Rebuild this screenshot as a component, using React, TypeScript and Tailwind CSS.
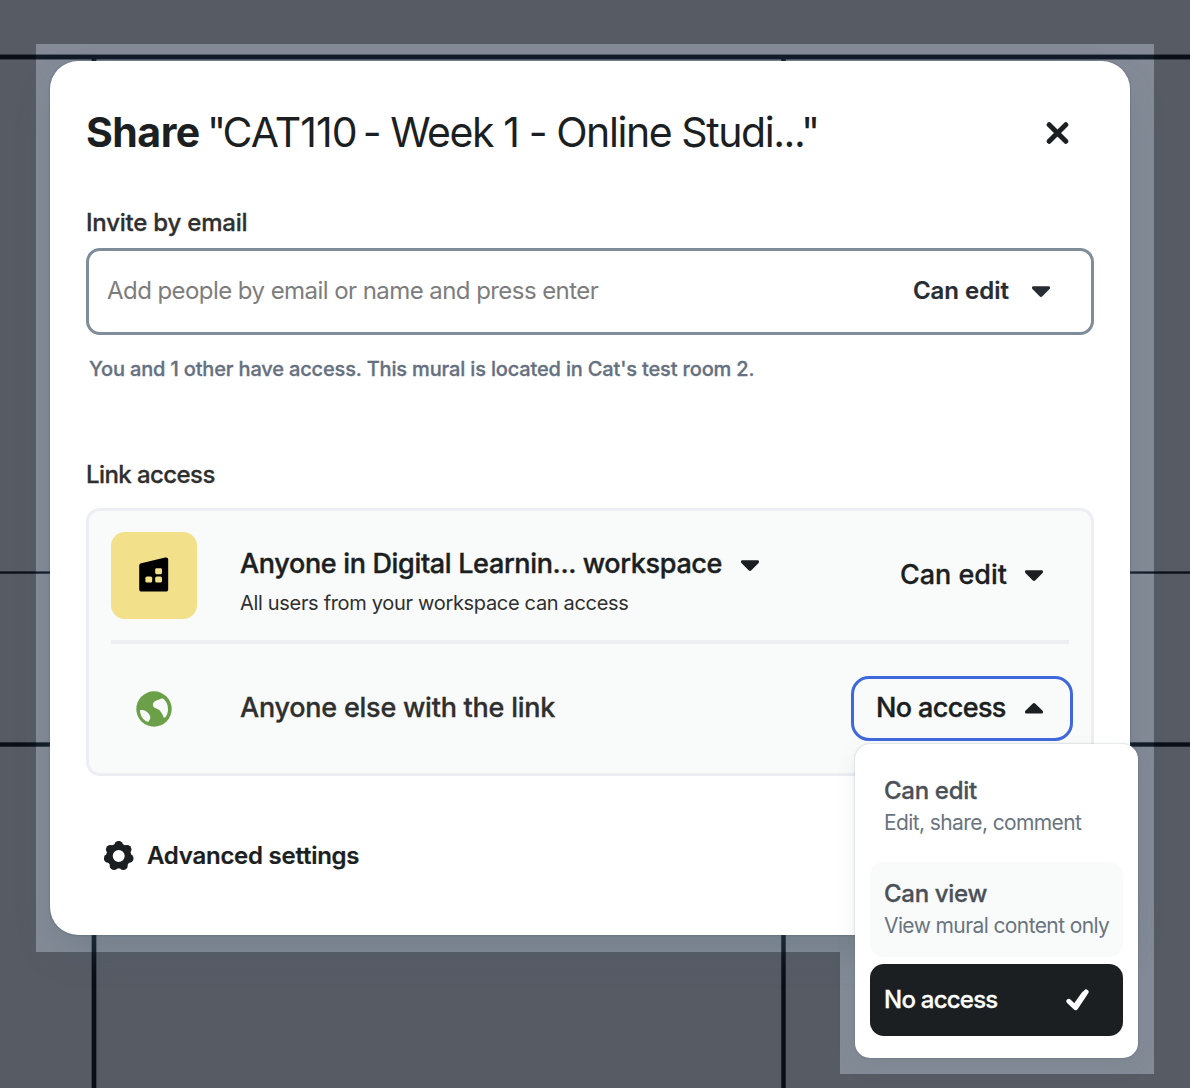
import type { ReactNode } from "react";

function Caret({ up = false, color = "#1c1f22" }: { up?: boolean; color?: string }) {
  return (
    <svg width="18" height="11" viewBox="0 0 18 11" fill={color} className="shrink-0">
      {up ? (
        <path d="M7.6 0.7 0.4 7.8C-0.4 8.9 0 10.6 1.3 10.6H16.7C18 10.6 18.4 8.9 17.6 7.8L10.4 0.7C9.5 -0.2 8.5 -0.2 7.6 0.7Z" />
      ) : (
        <path d="M7.6 10.2 0.4 3.1C-0.4 2 0 0.3 1.3 0.3H16.7C18 0.3 18.4 2 17.6 3.1L10.4 10.2C9.5 11.1 8.5 11.1 7.6 10.2Z" />
      )}
    </svg>
  );
}

function CloseIcon() {
  return (
    <svg width="23" height="22" viewBox="0 0 23 22" fill="none" stroke="#1c1f22" strokeWidth="5" strokeLinecap="round">
      <path d="M3.2 2.7 19.8 19.3M19.8 2.7 3.2 19.3" />
    </svg>
  );
}

function GearIcon() {
  const lobes = [0, 1, 2, 3, 4, 5, 6].map((i) => {
    const a = (i * 2 * Math.PI) / 7;
    return { x: 14.7 + 10.7 * Math.sin(a), y: 15 - 10.7 * Math.cos(a) };
  });
  return (
    <svg width="30" height="30" viewBox="0 0 30 30" fill="#1c1f22">
      {lobes.map((l, i) => (
        <circle key={i} cx={l.x} cy={l.y} r="4.4" />
      ))}
      <circle cx="14.7" cy="15" r="9.2" fill="none" stroke="#1c1f22" strokeWidth="6.4" />
    </svg>
  );
}

function BuildingIcon() {
  return (
    <svg width="30" height="35" viewBox="0 0 30 35">
      <path d="M2.3 6.3 26.2 0.6C28 0.2 29.2 1 29.2 2.6V32.2C29.2 33.8 28.4 34.6 26.8 34.6H2.6C1 34.6 0.2 33.8 0.2 32.2V8.8C0.2 7.4 0.9 6.6 2.3 6.3Z" fill="#000" />
      <g fill="#f2e18a">
        <rect x="16.2" y="11.2" width="6.8" height="6" rx="1.4" />
        <rect x="6.4" y="19.6" width="6.8" height="6" rx="1.6" />
        <rect x="16.2" y="19.6" width="6.8" height="6" rx="1.6" />
      </g>
    </svg>
  );
}

function GlobeIcon() {
  return (
    <svg width="36" height="36" viewBox="0 0 36 36">
      <circle cx="18" cy="18" r="17.7" fill="#6ba048" />
      <g fill="#f9fbfa">
        <path d="M27.6 8C30.2 10.2 32 14 32 18C32 21.4 31 24.2 29.4 26.3C28.7 27 27.8 26.6 27.4 25.8C26.6 23.6 25.2 21 23.5 19.3C21.8 18 18.6 17.6 17.3 15.6C16.3 13.8 17 11.6 18.6 10.4C20 9.3 21.8 9.4 23.2 8.6C24.6 7.6 26.4 7.3 27.6 8Z" />
        <path d="M4 19.2C6.4 18.7 8.4 19.2 10 20.3C12 21.6 14.2 23.8 14.3 26.3C14.3 28.3 13.3 29.4 12.6 30.4C12 31 11 30.6 9.8 29.9C6.2 27.6 4 23.6 4 19.2Z" />
      </g>
    </svg>
  );
}

function CheckIcon() {
  return (
    <svg width="23" height="22" viewBox="0 0 23 22" fill="none" stroke="#fff" strokeWidth="4.8" strokeLinecap="round" strokeLinejoin="round">
      <path d="M2.8 12.2 9.6 18.8 20.2 2.9" />
      <path d="M9.4 17 18 5" strokeWidth="5.2" />
    </svg>
  );
}

function GridLines({ color }: { color: string }) {
  return (
    <svg width="1190" height="1088" viewBox="0 0 1190 1088" className="absolute left-0 top-0" fill={color}>
      <rect y="54" width="1190" height="6" opacity="0.45" />
      <rect y="55" width="1190" height="4" />
      <rect y="571" width="1190" height="3" opacity="0.4" />
      <rect y="571.7" width="1190" height="1.8" />
      <rect y="742" width="1190" height="5" opacity="0.35" />
      <rect y="742.5" width="1190" height="4" />
      <rect x="91" width="6" y="56" height="1032" opacity="0.35" />
      <rect x="92" width="4" y="56" height="1032" />
      <rect x="781" width="5" y="56" height="1032" opacity="0.5" />
      <rect x="781.5" width="4" y="56" height="1032" />
    </svg>
  );
}

function MenuItem({ title, children }: { title: string; children: ReactNode }) {
  return (
    <>
      <div className="h-7 text-[24px] leading-7 font-medium tracking-[-0.3px] text-[#4a5158] [-webkit-text-stroke:0.3px]">{title}</div>
      <div className="mt-[6px] h-6 text-[21px] leading-6 tracking-[-0.6px] text-[#697480]">{children}</div>
    </>
  );
}

export default function App() {
  return (
    <div className="relative h-[1088px] w-[1190px] overflow-hidden bg-[#575b64] font-['Inter',sans-serif] whitespace-nowrap text-[#1c1f22]">
      <GridLines color="#0a0e17" />
      <div className="absolute left-[36px] top-[44px] h-[908px] w-[1118px] overflow-hidden bg-[#848b97]">
        <div className="absolute -left-[36px] -top-[44px]">
          <GridLines color="#111a27" />
        </div>
      </div>
      <div className="absolute left-[840px] top-[952px] h-[122px] w-[314px] bg-[#848b97]" />

      <div className="relative mt-[61px] ml-[50px] flex h-[874px] w-[1080px] flex-col rounded-[28px] bg-white px-9 shadow-[0_0_2px_rgba(60,75,90,0.7),0_20px_40px_-8px_rgba(70,95,110,0.3)]">
        <header className="mt-[35px] flex h-[72px] items-center">
          <h1 className="flex items-center text-[41px] leading-[72px]">
            <span className="w-[121px] font-bold tracking-[-0.5px]">Share</span>
            <span className="mr-[-2px] tracking-[-1.5px]">"</span>
            <span className="tracking-[-0.95px]">CAT110</span>
            <span className="-ml-[4px] whitespace-pre tracking-[-1.42px]"> - Week 1 - Online Studi..."</span>
          </h1>
          <button className="mt-[2px] mr-[25px] ml-auto">
            <CloseIcon />
          </button>
        </header>

        <div className="mt-[39px] h-8 text-[24px] leading-8 font-medium tracking-[-0.22px] text-[#2f2f2f] [-webkit-text-stroke:0.3px]">Invite by email</div>
        <div className="mt-[9px] flex h-[87px] items-center rounded-[14px] border-3 border-[#7f8c99] pr-[41px] pl-[18px]">
          <span className="-mt-[2px] text-[24px] tracking-[-0.56px] text-[#7d7d7d]">Add people by email or name and press enter</span>
          <span className="-mt-[2px] mr-[23px] ml-auto text-[24px] font-semibold text-[#272d33] [-webkit-text-stroke:0.2px]">Can edit</span>
          <Caret color="#272d33" />
        </div>
        <div className="mt-5 h-7 pl-[3px] text-[20px] leading-7 font-medium tracking-[-0.16px] text-[#657080] [-webkit-text-stroke:0.3px]">
          You and 1 other have access. This mural is located in Cat's test room 2.
        </div>

        <div className="mt-[76px] h-8 text-[24px] leading-8 font-medium tracking-[-0.58px] text-[#2f2f2f] [-webkit-text-stroke:0.3px]">Link access</div>
        <div className="mt-[17px] h-[268px] rounded-[14px] border-3 border-[#eceef3] bg-[#f9fbfa] px-[22px]">
          <div className="flex h-[129px] items-center">
            <div className="flex h-[87px] w-[86px] items-center justify-center rounded-[14px] bg-[#f2e18a]">
              <div className="pb-[2px]">
                <BuildingIcon />
              </div>
            </div>
            <div className="ml-[43px] pt-[12px]">
              <div className="flex h-9 items-center gap-[19px] text-[27px] font-medium tracking-[-0.34px] [-webkit-text-stroke:0.4px]">
                Anyone in Digital Learnin... workspace
                <span className="pt-[3px]">
                  <Caret />
                </span>
              </div>
              <div className="mt-[7px] h-7 text-[20px] leading-7 tracking-[-0.32px] text-[#2f2f2f]">All users from your workspace can access</div>
            </div>
            <div className="mr-[26px] ml-auto flex items-center gap-[18px] text-[27px] font-medium [-webkit-text-stroke:0.3px]">
              Can edit
              <Caret />
            </div>
          </div>
          <div className="h-1 bg-[#eceef3]" />
          <div className="flex h-[129px] items-center">
            <div className="flex w-[86px] justify-center pr-px">
              <GlobeIcon />
            </div>
            <div className="ml-[43px] text-[27px] font-medium tracking-[-0.24px] text-[#2f2f2f] [-webkit-text-stroke:0.3px]">Anyone else with the link</div>
            <div className="relative -mr-1 ml-auto flex h-[65px] w-[222px] items-center rounded-[18px] border-3 border-[#3f68dc] bg-[#f9fbfa] pr-[27px] pl-[22px]">
              <span className="text-[27px] font-medium tracking-[-0.62px] [-webkit-text-stroke:0.4px]">No access</span>
              <span className="ml-auto">
                <Caret up />
              </span>
              <div className="absolute top-[65px] left-px z-10 h-[314px] w-[283px] rounded-[15px] bg-white px-[15px] pt-[15px] shadow-[0_0_2px_rgba(50,65,80,0.35),0_8px_20px_rgba(70,95,110,0.1)]">
                <div className="h-[95px] px-[14px] pt-[18px]">
                  <MenuItem title="Can edit">Edit, share, comment</MenuItem>
                </div>
                <div className="mt-2 h-[95px] rounded-[14px] bg-[#f9fbfa] px-[14px] pt-[18px]">
                  <MenuItem title="Can view">View mural content only</MenuItem>
                </div>
                <div className="mt-[7px] flex h-[72px] items-center justify-between rounded-[14px] bg-[#1c1f22] pr-[34px] pl-[14px] text-white">
                  <span className="text-[24px] font-medium tracking-[-0.76px] [-webkit-text-stroke:0.3px]">No access</span>
                  <CheckIcon />
                </div>
              </div>
            </div>
          </div>
        </div>

        <div className="mt-[63px] flex h-[33px] items-center gap-[13px] pl-[18px]">
          <GearIcon />
          <span className="text-[24px] font-semibold tracking-[-0.25px] [-webkit-text-stroke:0.2px]">Advanced settings</span>
        </div>
      </div>
    </div>
  );
}
